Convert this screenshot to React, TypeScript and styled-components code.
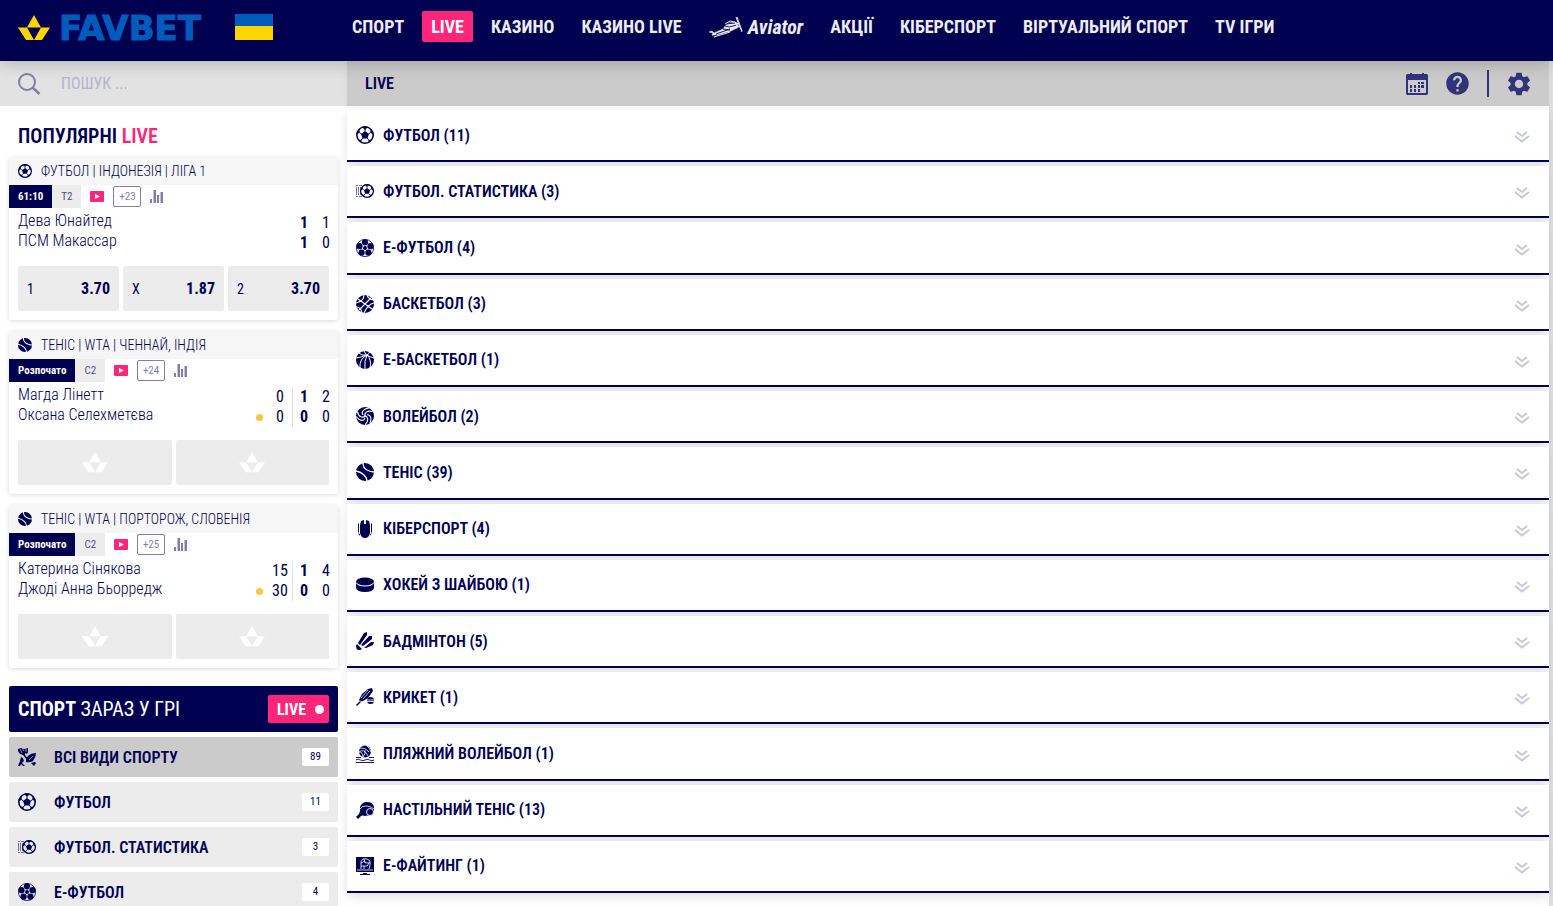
import React from "react";
import styled, { createGlobalStyle } from "styled-components";
import { MdHelp, MdSettings } from "react-icons/md";

const navy = "#000051";
const pink = "#ff2578";
const muted = "#7f7fa8";

const GlobalStyle = createGlobalStyle`
  *, *::before, *::after { box-sizing: border-box; }
  body {
    margin: 0;
    background: #fff;
    color: ${navy};
    font-family: "Roboto Condensed", Roboto, "Liberation Sans", sans-serif;
    font-size: 16px;
  }
  button, input { font: inherit; color: inherit; }
  button { border: 0; padding: 0; background: none; cursor: pointer; }
  a { color: inherit; text-decoration: none; }
  ul { list-style: none; margin: 0; padding: 0; }
  h1, h2, h3 { margin: 0; }
  svg { display: block; flex: none; }
`;

const Shell = styled.div`
  display: flex;
  flex-direction: column;
  height: 100vh;
  overflow: hidden;
`;

const Header = styled.header`
  display: flex;
  align-items: flex-start;
  flex: none;
  height: 61px;
  background: ${navy};
  box-shadow: 0 2px 16px rgba(0, 0, 0, 0.22);
  z-index: 2;
`;

const Brand = styled.a`
  display: flex;
  align-items: center;
  gap: 9px;
  width: 343px;
  padding: 8px 0 0 18px;
`;

const BrandName = styled.span`
  width: 167px;
  padding-top: 2px;
  color: #005bbb;
  font-family: "DejaVu Sans", sans-serif;
  font-weight: 700;
  font-size: 34px;
  line-height: 36px;
  -webkit-text-stroke: 1px #005bbb;
`;

const Nav = styled.nav`
  display: flex;
  align-items: center;
  gap: 9px;
  padding-top: 11px;
`;

const NavLink = styled.a<{ $active?: boolean }>`
  display: flex;
  align-items: center;
  gap: 5px;
  height: 31px;
  padding: 0 9px;
  border-radius: 2px;
  color: ${(p) => (p.$active ? "#fff" : "#ececec")};
  background: ${(p) => (p.$active ? pink : "transparent")};
  font-size: 18px;
  font-weight: 700;
  white-space: nowrap;
`;

const AviatorName = styled.span`
  font-style: italic;
  font-size: 20px;
  line-height: 24px;
`;

const Body = styled.div`
  display: flex;
  flex: 1;
  min-height: 0;
  padding-right: 4px;
  background: linear-gradient(to left, #e0e0e0 4px, transparent 4px);
`;

const Sidebar = styled.aside`
  display: flex;
  flex-direction: column;
  flex: none;
  width: 347px;
  min-height: 0;
`;

const Search = styled.label`
  display: flex;
  align-items: center;
  gap: 20px;
  flex: none;
  height: 45px;
  padding: 0 18px;
  background: #e2e2e2;
`;

const SearchInput = styled.input`
  flex: 1;
  min-width: 0;
  border: 0;
  padding: 0;
  outline: 0;
  background: none;
  font-size: 16px;
  &::placeholder { color: #b4b4cb; opacity: 1; }
`;

const SidebarScroll = styled.div`
  flex: 1;
  min-height: 0;
  overflow: hidden;
  padding: 0 9px;
`;

const Title = styled.h2`
  padding: 18px 9px 9px;
  font-size: 20px;
  line-height: 24px;
  font-weight: 600;
`;

const Pink = styled.span`
  color: ${pink};
`;

const Cards = styled.div`
  display: flex;
  flex-direction: column;
  gap: 11px;
  margin-bottom: 18px;
`;

const Card = styled.article`
  border-radius: 3px;
  background: #fff;
  box-shadow: 0 1px 5px rgba(0, 0, 0, 0.14);
  overflow: hidden;
`;

const CardHead = styled.h3`
  display: flex;
  align-items: center;
  gap: 9px;
  height: 28px;
  padding: 0 9px;
  background: #f6f6f6;
  font-size: 14px;
  font-weight: 350;
  white-space: nowrap;
`;

const StatusRow = styled.div`
  display: flex;
  align-items: center;
  gap: 9px;
  height: 23px;
`;

const Status = styled.div`
  display: flex;
  height: 23px;
  font-size: 11px;
  line-height: 23px;
`;

const Phase = styled.span<{ $dark?: boolean }>`
  padding: 0 9px;
  font-weight: ${(p) => (p.$dark ? 700 : 400)};
  color: ${(p) => (p.$dark ? "#fff" : "#4c4c85")};
  background: ${(p) => (p.$dark ? navy : "#ececec")};
`;

const More = styled.button`
  height: 21px;
  width: 28px;
  border: 1px solid ${muted};
  border-radius: 2px;
  color: ${muted};
  font-size: 11px;
  line-height: 19px;
`;

const Teams = styled.div`
  display: flex;
  justify-content: space-between;
  padding: 3px 1px 13px 9px;
  line-height: 20px;
  font-weight: 350;
`;

const Names = styled.div`
  display: flex;
  flex-direction: column;
`;

const Scores = styled.div`
  display: flex;
  padding-top: 2px;
`;

const ScoreColumn = styled.div<{ $kind?: "set" | "point" }>`
  display: flex;
  flex-direction: column;
  align-items: center;
  width: ${(p) => (p.$kind === "point" ? "auto" : "22px")};
  padding-right: ${(p) => (p.$kind === "point" ? "4px" : "0")};
  border-right: ${(p) => (p.$kind === "point" ? "1px solid #e2e2e2" : "0")};
  font-weight: ${(p) => (p.$kind === "set" ? 700 : 400)};
`;

const Serve = styled.span`
  align-self: flex-end;
  width: 7px;
  height: 7px;
  margin: 0 9px 6px 0;
  border-radius: 50%;
  background: #f4c93c;
`;

const PointCell = styled.span`
  min-width: 16px;
  text-align: center;
`;

const Odds = styled.div`
  display: flex;
  gap: 4px;
  padding: 0 9px 9px;
`;

const Odd = styled.button`
  display: flex;
  flex: 1;
  align-items: center;
  justify-content: space-between;
  height: 45px;
  padding: 0 9px;
  border-radius: 2px;
  background: #ececec;
  font-size: 14px;
  font-weight: 400;
`;

const Price = styled.span`
  font-size: 16px;
  font-weight: 700;
`;

const EmptyOdd = styled(Odd)`
  justify-content: center;
`;

const LiveHead = styled.div`
  display: flex;
  align-items: center;
  justify-content: space-between;
  height: 46px;
  padding: 0 9px;
  margin-bottom: 5px;
  border-radius: 2px;
  background: ${navy};
  color: #fff;
`;

const LiveTitle = styled.h2`
  font-size: 20px;
  font-weight: 400;
`;

const LiveToggle = styled.button`
  display: flex;
  align-items: center;
  gap: 9px;
  height: 28px;
  padding: 0 5px 0 9px;
  border-radius: 2px;
  background: ${pink};
  color: #fff;
  font-size: 16px;
  font-weight: 700;
  &::after {
    content: "";
    width: 9px;
    height: 9px;
    border-radius: 50%;
    background: #fff;
  }
`;

const SportMenu = styled.ul`
  display: flex;
  flex-direction: column;
  gap: 5px;
`;

const MenuButton = styled.button<{ $active?: boolean }>`
  display: flex;
  align-items: center;
  width: 100%;
  height: 40px;
  padding: 0 9px;
  gap: 18px;
  border-radius: 2px;
  background: ${(p) => (p.$active ? "#cbcbcb" : "#ececec")};
  font-weight: 600;
  text-align: left;
`;

const Grow = styled.span`
  flex: 1;
`;

const Count = styled.span`
  width: 27px;
  height: 18px;
  border-radius: 2px;
  background: #fff;
  font-size: 11px;
  font-weight: 400;
  line-height: 18px;
  text-align: center;
`;

const Main = styled.main`
  display: flex;
  flex-direction: column;
  flex: 1;
  min-width: 0;
`;

const Toolbar = styled.div`
  display: flex;
  align-items: center;
  flex: none;
  height: 45px;
  padding: 0 16px 0 18px;
  background: #cbcbcb;
  box-shadow: 0 1px 6px rgba(0, 0, 0, 0.06);
`;

const ToolbarTitle = styled.h1`
  flex: 1;
  font-size: 16px;
  font-weight: 600;
`;

const Tools = styled.div`
  display: flex;
  align-items: center;
  gap: 16px;
  color: #33337a;
`;

const Divider = styled.span`
  width: 2px;
  height: 27px;
  background: #33337a;
`;

const SportList = styled.ul`
  display: flex;
  flex-direction: column;
  flex: 1;
  padding-bottom: 13px;
`;

const SportItem = styled.li`
  display: flex;
  flex: 1;
  padding-top: 4px;
`;

const SportRow = styled.button`
  display: flex;
  align-items: center;
  flex: 1;
  gap: 9px;
  padding: 0 19px 0 9px;
  border-bottom: 2px solid ${navy};
  background: #fff;
  box-shadow: 0 4px 10px rgba(0, 0, 0, 0.12);
  font-weight: 600;
  text-align: left;
`;

/* ---------- icons ---------- */

const Crown = ({ w, color }: { w: number; color: string }) => (
  <svg width={w} height={(w * 25) / 32} viewBox="0 0 32 25" fill={color}>
    <path d="M16 0l7 12.500H9zM0 12.500h9l7 12.500H8zM32 12.500h-9l-7 12.500h8z" />
  </svg>
);

const Flag = () => (
  <svg width="38" height="26" viewBox="0 0 38 26">
    <path fill="#005bbb" d="M0 0h38v12H0z" />
    <path fill="#ffd500" d="M0 12h38v14H0z" />
  </svg>
);

const Plane = () => (
  <svg width="34" height="22" viewBox="0 0 34 22" fill="none" stroke="#ececec">
    <path
      fill="#ececec"
      d="M0 16l3-1 2 2 9-4 3-4 3-2 7-1 3 5-8 4-14 4-3 1-2-1 1-2z"
      strokeWidth=".5"
    />
    <path d="M17 8l9-1M16 10l4 1 8-2M14 13l7 1M7 18l14-5M4 20l4-1" stroke={navy} strokeWidth=".9" />
    <path d="M16 8l5-3 5 1M27 1l3 8 3 7M28 1l5 14M30 7l-3 1 1 4M5 21l16-5" strokeWidth="1" />
  </svg>
);

const SearchIcon = () => (
  <svg width="23" height="22" viewBox="0 0 23 22" fill="none" stroke={muted} strokeWidth="2">
    <circle cx="9" cy="9" r="8" />
    <path d="M14.500 14.500l7 6.500" strokeWidth="2.500" />
  </svg>
);

const Calendar = () => (
  <svg width="22" height="22" viewBox="0 0 22 22" fill="currentColor">
    <path
      fillRule="evenodd"
      d="M4 0h2v1h10V0h2v1h3l1 1v19l-1 1H1l-1-1V2l1-1h3zM2 7v13h18V7z"
    />
    <path d="M12 9h2v2h-2zM15 9h3v2h-3zM4 12h2v3H4zM8 12h2v3H8zM12 12h2v3h-2zM15 12h3v3h-3zM4 16h2v3H4zM8 16h2v3H8zM12 16h2v3h-2z" />
  </svg>
);

const Chevrons = () => (
  <svg width="16" height="16" viewBox="0 -4 16 16" fill="none" stroke="#c8c8dc" strokeWidth="2">
    <path d="M3 1l5 4 5-4M1 5l7 5.500L15 5" />
  </svg>
);

const VideoIcon = () => (
  <svg width="14" height="11" viewBox="0 0 14 11">
    <rect width="14" height="11" rx="1" fill={pink} />
    <path d="M5 3l5 2.500L5 8z" fill="#fff" />
  </svg>
);

const StatsIcon = () => (
  <svg width="13" height="13" viewBox="0 0 13 13" fill={muted}>
    <path d="M0 9h2v4H0zM3.500 0h2.500v13H3.500zM7 5h2v8H7zM10.500 2H13v11h-2.500z" />
  </svg>
);

type IconProps = { size?: number };

const Svg = ({ size = 18, children }: { size?: number; children: React.ReactNode }) => (
  <svg width={size} height={size} viewBox="0 0 18 18" fill={navy}>
    {children}
  </svg>
);

const FootballShape = () => (
  <>
    <circle cx="9" cy="9" r="8.200" fill="none" stroke={navy} strokeWidth="1.600" />
    <path d="M9 5l4 2.900-1.600 4.500H6.600L5 7.900zM5.400 1L9 3.600 12.600 1 9 .2zM14.300 6.800l.2-4.200 3.200 6zM3.700 6.800l-.2-4.200L.3 8.600zM12.600 14.100l3.800-.8-4.300 4zM5.400 14.100l-3.800-.8 4.300 4z" />
    <path
      d="M9 5.200V3M12.600 7.900l2-1.300M11.200 12.100l1.700 2.200M6.800 12.100l-1.700 2.200M5.400 7.900l-2-1.300"
      stroke={navy}
      strokeWidth="1"
    />
  </>
);

const Football = ({ size }: IconProps) => (
  <Svg size={size}>
    <FootballShape />
  </Svg>
);

const FootballStats = () => (
  <Svg>
    <path d="M0 3h2v1H0zM3 3h3v1H3zM0 5h1v8H0zM2 5h1v8H2zM4 5h1v8H4zM0 14h2v1H0zM3 14h3v1H3z" opacity=".55" />
    <g transform="translate(4 2) scale(.78)">
      <FootballShape />
    </g>
  </Svg>
);

const EFootball = () => (
  <Svg>
    <circle cx="9" cy="9" r="8.600" fill="none" stroke={navy} strokeWidth=".8" />
    <circle cx="9" cy="9" r="2" />
    <circle cx="9" cy="3.300" r="3.100" />
    <circle cx="14.500" cy="7.200" r="3.100" />
    <circle cx="12.400" cy="13.700" r="3.100" />
    <circle cx="5.600" cy="13.700" r="3.100" />
    <circle cx="3.500" cy="7.200" r="3.100" />
  </Svg>
);

const Basketball = () => (
  <Svg>
    <circle cx="9" cy="9" r="9" />
    <path
      d="M2 4l14 10M15 3L3 15M8 0q0 6-8 8M18 8q-6 1-10 10M11 0q1 4 7 5M0 12q5 0 6 6"
      fill="none"
      stroke="#fff"
      strokeWidth="1.100"
    />
  </Svg>
);

const EBasketball = () => (
  <Svg>
    <circle cx="9" cy="9" r="9" />
    <path
      d="M8 0q2 4 3 4 3 2 7 3M0 7q6-1 11-3 2-1 3-4M11 4Q3 8 4 17M11 4Q8 10 9 18M11 4q5 5 3 13M3 2q2 3 8 2"
      fill="none"
      stroke="#fff"
      strokeWidth="1"
    />
  </Svg>
);

const swirl = "M9 9.500C8 6 11 3 16.500 4.500M7 8C5 5 7 2 13 1";

const Volleyball = () => (
  <Svg>
    <circle cx="9" cy="9" r="9" />
    <g fill="none" stroke="#fff" strokeWidth="1.100">
      <path d={swirl} />
      <path d={swirl} transform="rotate(120 9 9)" />
      <path d={swirl} transform="rotate(240 9 9)" />
    </g>
  </Svg>
);

const Tennis = ({ size }: IconProps) => (
  <Svg size={size}>
    <circle cx="9" cy="9" r="9" />
    <path d="M7 0q0 5 4 7t7 2M0 8q5 1 8 4t3 6" fill="none" stroke="#fff" strokeWidth="1.300" />
  </Svg>
);

const Mouse = () => (
  <Svg>
    <path d="M5 1l3-1v4h2V0l3 1 1 4v8q-1 5-5 5t-5-5V5zM2 4l1-1v10l-1-1zM16 4l-1-1v10l1-1zM2 13l2 1v2zM16 13l-2 1v2z" />
  </Svg>
);

const Puck = () => (
  <Svg>
    <path d="M0 7v5q1 4 9 4t9-4V7q-2 3.500-9 3.500T0 7z" />
    <ellipse cx="9" cy="5.500" rx="9" ry="4" />
  </Svg>
);

const Shuttlecock = () => (
  <Svg>
    <path d="M0 14l1-2 5 5-2 1H2q-2-1-2-4zM2 11L8 1l3-1v3L4 13zM5 13l8-9 3 0v3l-9 7zM8 16l7-6 3 0-1 3-7 3z" />
  </Svg>
);

const Cricket = () => (
  <Svg>
    <path d="M0 17l4-4-1-1 3-6 6-5 4-1 1 3-5 7-5 3-2 1-4 4z" />
    <path d="M5 10l7-8M7 11l7-8M4 13l3 1" stroke="#fff" strokeWidth=".7" />
    <circle cx="14.500" cy="12.500" r="3.500" />
    <path d="M11 12h7M11 13.500h7" stroke="#fff" strokeWidth=".8" />
  </Svg>
);

const BeachVolleyball = () => (
  <Svg>
    <circle cx="9" cy="6.500" r="6" />
    <path d="M4 3q5-1 9 4M3 7q5-4 9 4M7 12q0-5-4-5M10 0q4 3 5 7M7 12q3-3 2-7" fill="none" stroke="#fff" strokeWidth=".8" />
    <path
      d="M0 12.500h5M13 12.500h5M0 15q2-1.500 4.500 0t4.500 0 4.500 0 4.500 0M0 17.500h18"
      fill="none"
      stroke={navy}
      strokeWidth=".9"
    />
  </Svg>
);

const TableTennis = () => (
  <Svg>
    <path d="M4 6q2-5 7-5 6 0 7 5v4l-2 4-8 1-4-4z" />
    <path d="M4 10l4 4-3 1-3 3-2-2 3-3z" />
    <path d="M3 9q3-5 8-4t7 3" fill="none" stroke="#fff" strokeWidth=".8" />
    <circle cx="14" cy="11" r="3.500" fill={navy} stroke="#fff" strokeWidth=".9" />
  </Svg>
);

const Monitor = () => (
  <Svg>
    <path d="M0 0h18v15H0zM7 16h4v1h3v1H4v-1h3z" />
    <path
      d="M5 12V8q-1-4 2-6 3-1 6 1 2 2 1 5l-1 4M5 6q3-3 5 0M8 2q0 4 3 4t3-1M5 9h6l2-3M8 12V9M1 13h16"
      fill="none"
      stroke="#fff"
      strokeWidth=".8"
    />
  </Svg>
);

const AllSports = () => (
  <Svg>
    <path d="M0 1l3-1 3 1 4-1v4L9 6 7 5v2l3 4-1 1-4-5-3-1-2-3z" />
    <path d="M8 14q-1-8 10-9 0 4-3 8-3 2-7 1zM3 9l2 1 1 3-2 2 3 3H5l-2-2-1 2H0l2-5zM13 15l4-1 1 1-2 3z" />
    <path d="M2 1l2 4M4 0l2 3M8 0v4M11 12l4-4" stroke="#cbcbcb" strokeWidth=".7" />
  </Svg>
);

/* ---------- data ---------- */

const nav = ["СПОРТ", "LIVE", "КАЗИНО", "КАЗИНО LIVE", "Aviator", "АКЦІЇ", "КІБЕРСПОРТ", "ВІРТУАЛЬНИЙ СПОРТ", "TV ІГРИ"];

type Match = {
  icon: React.ComponentType<IconProps>;
  league: string;
  clock: string;
  phase: string;
  more: string;
  teams: [string, string];
  points?: [string, string];
  sets: [string, string];
  games: [string, string];
  odds?: [string, string][];
};

const matches: Match[] = [
  {
    icon: Football,
    league: "ФУТБОЛ | ІНДОНЕЗІЯ | ЛІГА 1",
    clock: "61:10",
    phase: "T2",
    more: "+23",
    teams: ["Дева Юнайтед", "ПСМ Макассар"],
    sets: ["1", "1"],
    games: ["1", "0"],
    odds: [["1", "3.70"], ["X", "1.87"], ["2", "3.70"]],
  },
  {
    icon: Tennis,
    league: "ТЕНІС | WTA | ЧЕННАЙ, ІНДІЯ",
    clock: "Розпочато",
    phase: "С2",
    more: "+24",
    teams: ["Магда Лінетт", "Оксана Селехметєва"],
    points: ["0", "0"],
    sets: ["1", "0"],
    games: ["2", "0"],
  },
  {
    icon: Tennis,
    league: "ТЕНІС | WTA | ПОРТОРОЖ, СЛОВЕНІЯ",
    clock: "Розпочато",
    phase: "С2",
    more: "+25",
    teams: ["Катерина Сінякова", "Джоді Анна Бьорредж"],
    points: ["15", "30"],
    sets: ["1", "0"],
    games: ["4", "0"],
  },
];

const menu = [
  { icon: AllSports, name: "ВСІ ВИДИ СПОРТУ", count: 89 },
  { icon: Football, name: "ФУТБОЛ", count: 11 },
  { icon: FootballStats, name: "ФУТБОЛ. СТАТИСТИКА", count: 3 },
  { icon: EFootball, name: "Е-ФУТБОЛ", count: 4 },
];

const sports = [
  { icon: Football, name: "ФУТБОЛ (11)" },
  { icon: FootballStats, name: "ФУТБОЛ. СТАТИСТИКА (3)" },
  { icon: EFootball, name: "Е-ФУТБОЛ (4)" },
  { icon: Basketball, name: "БАСКЕТБОЛ (3)" },
  { icon: EBasketball, name: "Е-БАСКЕТБОЛ (1)" },
  { icon: Volleyball, name: "ВОЛЕЙБОЛ (2)" },
  { icon: Tennis, name: "ТЕНІС (39)" },
  { icon: Mouse, name: "КІБЕРСПОРТ (4)" },
  { icon: Puck, name: "ХОКЕЙ З ШАЙБОЮ (1)" },
  { icon: Shuttlecock, name: "БАДМІНТОН (5)" },
  { icon: Cricket, name: "КРИКЕТ (1)" },
  { icon: BeachVolleyball, name: "ПЛЯЖНИЙ ВОЛЕЙБОЛ (1)" },
  { icon: TableTennis, name: "НАСТІЛЬНИЙ ТЕНІС (13)" },
  { icon: Monitor, name: "Е-ФАЙТИНГ (1)" },
];

/* ---------- views ---------- */

const MatchCard = ({ match: m }: { match: Match }) => (
  <Card>
    <CardHead>
      <m.icon size={14} />
      {m.league}
    </CardHead>
    <StatusRow>
      <Status>
        <Phase $dark>{m.clock}</Phase>
        <Phase>{m.phase}</Phase>
      </Status>
      <VideoIcon />
      <More>{m.more}</More>
      <StatsIcon />
    </StatusRow>
    <Teams>
      <Names>
        <span>{m.teams[0]}</span>
        <span>{m.teams[1]}</span>
      </Names>
      <Scores>
        {m.points && <Serve />}
        {m.points && (
          <ScoreColumn $kind="point">
            <PointCell>{m.points[0]}</PointCell>
            <PointCell>{m.points[1]}</PointCell>
          </ScoreColumn>
        )}
        <ScoreColumn $kind="set">
          <span>{m.sets[0]}</span>
          <span>{m.sets[1]}</span>
        </ScoreColumn>
        <ScoreColumn>
          <span>{m.games[0]}</span>
          <span>{m.games[1]}</span>
        </ScoreColumn>
      </Scores>
    </Teams>
    <Odds>
      {m.odds
        ? m.odds.map(([label, price]) => (
            <Odd key={label}>
              <span>{label}</span>
              <Price>{price}</Price>
            </Odd>
          ))
        : [0, 1].map((i) => (
            <EmptyOdd key={i} aria-label="Недоступно">
              <Crown w={26} color="#fff" />
            </EmptyOdd>
          ))}
    </Odds>
  </Card>
);

export default function App() {
  return (
    <>
      <GlobalStyle />
      <Shell>
        <Header>
          <Brand href="#">
            <Crown w={32} color="#ffd500" />
            <BrandName>FAVBET</BrandName>
            <Flag />
          </Brand>
          <Nav>
            {nav.map((item) => (
              <NavLink key={item} href="#" $active={item === "LIVE"}>
                {item === "Aviator" ? (
                  <>
                    <Plane />
                    <AviatorName>Aviator</AviatorName>
                  </>
                ) : (
                  item
                )}
              </NavLink>
            ))}
          </Nav>
        </Header>
        <Body>
          <Sidebar>
            <Search>
              <SearchIcon />
              <SearchInput type="text" placeholder="ПОШУК ..." aria-label="Пошук" />
            </Search>
            <SidebarScroll>
              <Title>
                ПОПУЛЯРНІ <Pink>LIVE</Pink>
              </Title>
              <Cards>
                {matches.map((m) => (
                  <MatchCard key={m.league} match={m} />
                ))}
              </Cards>
              <LiveHead>
                <LiveTitle>
                  <b>СПОРТ</b> ЗАРАЗ У ГРІ
                </LiveTitle>
                <LiveToggle>LIVE</LiveToggle>
              </LiveHead>
              <SportMenu>
                {menu.map((s, i) => (
                  <li key={s.name}>
                    <MenuButton $active={i === 0}>
                      <s.icon />
                      <Grow>{s.name}</Grow>
                      <Count>{s.count}</Count>
                    </MenuButton>
                  </li>
                ))}
              </SportMenu>
            </SidebarScroll>
          </Sidebar>
          <Main>
            <Toolbar>
              <ToolbarTitle>LIVE</ToolbarTitle>
              <Tools>
                <button aria-label="Календар">
                  <Calendar />
                </button>
                <button aria-label="Допомога">
                  <MdHelp size={27} />
                </button>
                <Divider />
                <button aria-label="Налаштування">
                  <MdSettings size={28} />
                </button>
              </Tools>
            </Toolbar>
            <SportList>
              {sports.map((s) => (
                <SportItem key={s.name}>
                  <SportRow>
                    <s.icon />
                    <Grow>{s.name}</Grow>
                    <Chevrons />
                  </SportRow>
                </SportItem>
              ))}
            </SportList>
          </Main>
        </Body>
      </Shell>
    </>
  );
}
